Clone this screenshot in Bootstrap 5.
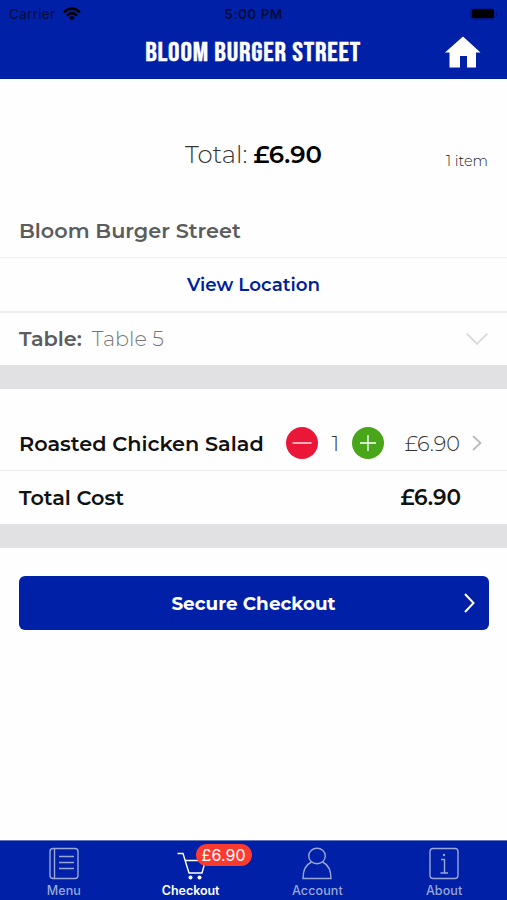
<!DOCTYPE html>
<html lang="en">
<head>
<meta charset="utf-8">
<meta name="viewport" content="width=device-width, initial-scale=1">
<title>Checkout</title>
<link href="https://cdn.jsdelivr.net/npm/bootstrap@5.3.0/dist/css/bootstrap.min.css" rel="stylesheet">
<style>
:root{--brand:#0021a7;--edge:19px}
body{font-family:Montserrat,Inter,sans-serif;color:#111;background:#fefefe;line-height:1.2}
svg{display:block;flex:none}
.app-head{background:var(--brand);height:79px}
.status{font-family:Inter,sans-serif;height:28px;color:#020b3c;padding:0 9px}
.status>*{flex:1 1 0}
.status-carrier{font-size:13.5px;letter-spacing:.3px}
.status-time{font-weight:600;font-size:13.5px;letter-spacing:.5px}
.head-row{height:48px}
.brand-title{font-family:"Bebas Neue",Roboto,sans-serif;color:#fff;font-weight:400;font-size:26px;line-height:1;white-space:nowrap;letter-spacing:.75px;transform:scaleX(1.1);-webkit-text-stroke:.45px #fff;padding-top:4px}
.edge{padding-left:var(--edge);padding-right:var(--edge)}
.summary{height:126px;padding-top:26px}
.sum-total{font-size:24.4px;font-weight:300;color:#333}
.sum-total b{font-weight:600;color:#000}
.sum-count{font-size:14.5px;font-weight:300;color:#222;padding-top:14px}
.venue{height:52px;font-size:20.8px;font-weight:600;color:#5c5c5c}
.loc{height:54px;border-top:1px solid #f0f0f0;color:#001f9c;font-size:18.3px;font-weight:600;padding-top:1px}
.tbl{height:54px;border-top:2px solid #ececec;font-size:20.8px}
.tbl-label{font-weight:600;color:#5c5c5c}
.tbl-val{font-weight:300;color:#777;margin-left:10px}
.band{height:24px;background:#e1e1e4}
.item{height:81px;padding-top:27px;font-size:20.8px}
.item-name{padding-top:3px}
.strong{font-weight:600}
.rule{border-top:1px solid #ececec}
.cost{height:54px;font-size:20.8px;padding-top:1px}
.cost-val{font-size:21.6px;margin-right:27px}
.light{font-weight:300;color:#333}
.qty{width:34px;padding:2px 0 0 1px}
.price{width:76px;padding-top:2px}
.chev{margin-left:12px;margin-right:6px}
.btn-pay{height:54px;background:var(--brand);border-radius:6px;color:#fff;font-weight:700;font-size:18.4px;margin:28px 18px 0 19px;padding:0 14px}
.btn-pay:hover{background:#001b88;color:#fff}
.pay-text{padding:1px 0 0 10px}
.tabs{height:60px;background:var(--brand);border-top:1px solid #6377bd;font-family:Inter,sans-serif}
.tab{color:#98a6d8;font-size:12.5px;font-weight:500;text-decoration:none;letter-spacing:.1px;padding:6px 0 0 1px}
.tab.on{color:#fff;font-weight:600;letter-spacing:-.05px}
.tab svg{fill:none;stroke:currentColor;stroke-width:1.4}
.tab-text{padding-top:3px}
.pill{position:absolute;left:20px;top:-3px;background:#fb3b30;color:#fff;border-radius:11px;height:22px;width:56px;font-size:16px;font-weight:400;letter-spacing:.1px;line-height:22px;text-align:center}
</style>
</head>
<body class="vh-100 d-flex flex-column overflow-hidden">
<header class="app-head">
  <div class="status d-flex align-items-center">
    <div class="d-flex align-items-center gap-2"><span class="status-carrier">Carrier</span>
      <svg width="18" height="14" viewBox="0 0 18 14" fill="none" stroke="#000" stroke-width="2.6"><path d="M1 5.2Q9-1.8 17 5.2M4 8.4Q9 4 14 8.4"/><path d="M9 13.4 6 10.4Q9 8 12 10.4Z" fill="#000" stroke="none"/></svg>
    </div>
    <div class="status-time text-center">5:00 PM</div>
    <div class="d-flex justify-content-end"><svg width="28" height="12" viewBox="0 0 28 12"><rect x=".5" y=".5" width="24" height="11" rx="3" fill="#00177a"/><rect x="2" y="1.3" width="22" height="8.8" rx="1.5"/><path d="M26 4v4q1.5-.5 1.5-2T26 4" fill="#00177a"/></svg></div>
  </div>
  <div class="head-row row g-0 align-items-center">
    <div class="col-2"></div>
    <div class="col-8 d-flex justify-content-center"><h1 class="brand-title m-0">BLOOM BURGER STREET</h1></div>
    <div class="col-2 d-flex justify-content-end pe-4"><svg width="40" height="32" viewBox="0 0 40 32" fill="#fff"><path d="M20 .5 37.500 16.500H33V31.500H24V20H17V31.500H6.500V16.500H2Z"/></svg></div>
  </div>
</header>
<main class="flex-grow-1">
  <section class="summary row g-0 edge align-items-center">
    <div class="col-3"></div>
    <div class="sum-total col-6 text-center">Total: <b>£6.90</b></div>
    <div class="sum-count col-3 text-end">1 item</div>
  </section>
  <div class="venue edge d-flex align-items-center">Bloom Burger Street</div>
  <a href="#" class="loc d-flex align-items-center justify-content-center text-decoration-none">View Location</a>
  <div class="tbl edge d-flex align-items-center">
    <span class="tbl-label">Table:</span><span class="tbl-val">Table 5</span>
    <svg class="ms-auto" width="22" height="12" viewBox="0 0 22 12" fill="none" stroke="#d8d8d8" stroke-width="1.8"><path d="M.7.7 11 10.800 21.300.7"/></svg>
  </div>
  <div class="band"></div>
  <div class="item edge d-flex align-items-center">
    <span class="strong item-name">Roasted Chicken Salad</span>
    <div class="d-flex align-items-center ms-auto light">
      <svg width="32" height="32" viewBox="0 0 32 32"><circle cx="16" cy="16" r="16" fill="#eb1738"/><path d="M6.500 16h19" stroke="#fff" stroke-width="1.3"/></svg>
      <span class="qty text-center">1</span>
      <svg width="32" height="32" viewBox="0 0 32 32"><circle cx="16" cy="16" r="16" fill="#49a51a"/><path d="M8 16h16M16 8v16" stroke="#fff" stroke-width="1.3"/></svg>
      <span class="price text-end">£6.90</span>
      <svg class="chev" width="10" height="16" viewBox="0 0 10 16" fill="none" stroke="#bbb" stroke-width="1.8"><path d="m1 1 7.500 7L1 15"/></svg>
    </div>
  </div>
  <div class="cost rule edge d-flex align-items-center justify-content-between strong"><span>Total Cost</span><span class="cost-val">£6.90</span></div>
  <div class="band"></div>
  <div class="d-grid"><button class="btn btn-pay border-0 d-flex align-items-center">
    <span class="flex-grow-1 pay-text">Secure Checkout</span>
    <svg width="11" height="20" viewBox="0 0 11 20" fill="none" stroke="#fff" stroke-width="2"><path d="m1 1 8.500 9L1 19"/></svg>
  </button></div>
</main>
<nav class="tabs row g-0">
  <a href="#" class="tab col d-flex flex-column align-items-center"><svg width="30" height="33" viewBox="0 0 30 33"><rect x="1" y="1.500" width="28" height="30" rx="3"/><path d="M5.500 1.500v30M10 9.500h15M10 15.500h15M10 21.500h15"/></svg><span class="tab-text">Menu</span></a>
  <a href="#" class="tab on col d-flex flex-column align-items-center"><span class="position-relative"><svg width="30" height="33" viewBox="0 0 30 33"><path d="M1.500 6.500H7L13 26H26L29.500 13.500H9"/><g fill="currentColor" stroke="none"><circle cx="14.500" cy="30.500" r="2"/><circle cx="23.500" cy="30.500" r="2"/></g></svg><span class="pill">£6.90</span></span><span class="tab-text">Checkout</span></a>
  <a href="#" class="tab col d-flex flex-column align-items-center"><svg width="30" height="33" viewBox="0 0 30 33"><ellipse cx="15" cy="9" rx="8.300" ry="7.700"/><path d="M9.500 15Q1 19 1 31.500H29Q29 19 20.500 15"/></svg><span class="tab-text">Account</span></a>
  <a href="#" class="tab col d-flex flex-column align-items-center"><svg width="30" height="33" viewBox="0 0 30 33"><rect x="1" y="1.500" width="28" height="30" rx="3"/><path d="M12 12.500h3.500V26M11.500 26h7.500"/><circle cx="15" cy="8" r="1.200" fill="currentColor" stroke="none"/></svg><span class="tab-text">About</span></a>
</nav>
<script src="https://cdn.jsdelivr.net/npm/bootstrap@5.3.0/dist/js/bootstrap.bundle.min.js"></script>
</body>
</html>
